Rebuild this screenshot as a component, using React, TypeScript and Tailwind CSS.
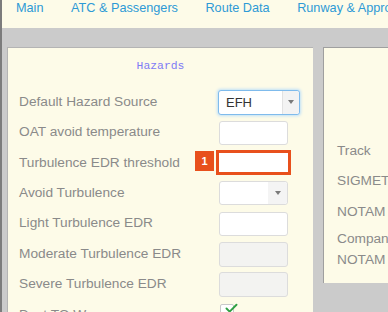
import { Check } from 'lucide-react'

const TABS = ['Main', 'ATC & Passengers', 'Route Data', 'Runway & Approach']

type Field = { label: string; kind: 'select' | 'input' | 'disabled' | 'flagged' | 'smallSelect' | 'check'; value?: string }

const FIELDS: Field[] = [
  { label: 'Default Hazard Source', kind: 'select', value: 'EFH' },
  { label: 'OAT avoid temperature', kind: 'input' },
  { label: 'Turbulence EDR threshold', kind: 'flagged' },
  { label: 'Avoid Turbulence', kind: 'smallSelect' },
  { label: 'Light Turbulence EDR', kind: 'input' },
  { label: 'Moderate Turbulence EDR', kind: 'disabled' },
  { label: 'Severe Turbulence EDR', kind: 'disabled' },
  { label: 'Dest TO Warn', kind: 'check' },
]

const Arrow = () => (
  <span className="w-0 h-0 border-l-[3.5px] border-r-[3.5px] border-t-[4px] border-l-transparent border-r-transparent border-t-[#7a7a7a]" />
)

function Control({ field }: { field: Field }) {
  switch (field.kind) {
    case 'select':
      return (
        <div className="ml-[-1px] flex h-[25px] w-[82px] rounded-[3px] border border-[#7fbbec] bg-white shadow-[0_0_3px_1px_#bfe0f8]">
          <span className="flex-1 pl-[7px] text-[13px] leading-[23px] text-[#333]">{field.value}</span>
          <span className="flex w-[17px] items-center justify-center rounded-r-[3px] border-l border-[#e2e2e2] bg-[#f3f3f3]">
            <Arrow />
          </span>
        </div>
      )
    case 'smallSelect':
      return (
        <div className="flex h-[24px] w-[69px] rounded-[3px] border border-[#dcdcdc] bg-white">
          <span className="flex-1" />
          <span className="flex w-[19px] items-center justify-center rounded-r-[3px] bg-[#f4f4f4]">
            <Arrow />
          </span>
        </div>
      )
    case 'flagged':
      return (
        <div className="relative ml-[-3px]">
          <span className="absolute left-[-21px] top-[1px] flex h-[20px] w-[19px] items-center justify-center bg-[#e8501c] text-[11px] font-bold text-white">
            1
          </span>
          <div className="h-[25px] w-[75px] border-[3px] border-[#e8501c] bg-white" />
        </div>
      )
    case 'disabled':
      return <div className="h-[25px] w-[69px] rounded-[3px] border border-[#dcdcdc] bg-[#f3f3f1]" />
    case 'check':
      return (
        <div className="relative ml-[1px] mt-[4px] h-[14px] w-[14px] self-start rounded-[2px] border border-[#c9c9c9] bg-white">
          <Check className="absolute left-[3px] top-[-4px] h-[15px] w-[15px] text-[#2ea043]" strokeWidth={3} />
        </div>
      )
    default:
      return <div className="h-[24px] w-[69px] rounded-[3px] border border-[#dcdcdc] bg-white" />
  }
}

export default function App() {
  return (
    <div className="flex h-[312px] w-[388px] flex-col overflow-hidden border-l-2 border-[#7c7c7c] bg-[#fdfbe8] font-['Liberation_Sans',Arial,sans-serif]">
      <nav className="flex h-[28px] shrink-0 items-start gap-[27.5px] whitespace-nowrap pl-[14px] text-[12.7px] leading-[16px] text-[#2d9ad6]">
        {TABS.map(t => (
          <span key={t}>{t}</span>
        ))}
      </nav>

      <div className="flex flex-1 items-start bg-[#cbcbcb] pl-[5px] pt-[19px]">
        <section className="w-[306px] shrink-0 self-stretch border-l border-t border-[#b4b4b4] bg-[#fdfbe8]">
          <div className="flex h-[39px] items-center justify-center pb-[2px] font-['Liberation_Mono',monospace] text-[11.4px] text-[#7d7cf5]">
            Hazards
          </div>
          {FIELDS.map(f => (
            <div key={f.label} className="flex h-[30.4px] items-center">
              <span className="w-[211px] shrink-0 whitespace-nowrap pl-[11px] text-[13.7px] text-[#8a8a8a]">{f.label}</span>
              <Control field={f} />
            </div>
          ))}
        </section>

        <section className="ml-[10px] h-[236px] flex-1 border-l border-t border-[#9f9f9f] bg-[#fdfbe8] pl-[13px] pt-[88px] text-[13.7px] text-[#8a8a8a]">
          <div className="flex h-[30.4px] items-center">Track</div>
          <div className="flex h-[30.4px] items-center">SIGMET</div>
          <div className="flex h-[30.4px] items-center">NOTAM</div>
          <div className="pt-[1px] leading-[21px]">
            Company
            <br />
            NOTAM
          </div>
        </section>
      </div>
    </div>
  )
}
